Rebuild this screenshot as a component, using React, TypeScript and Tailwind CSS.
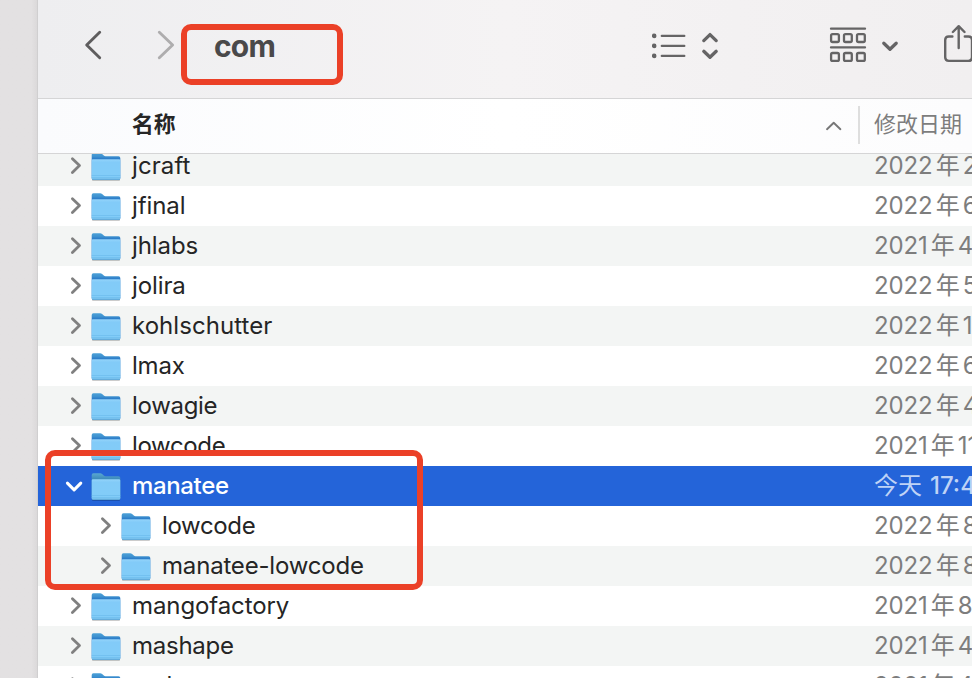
import React from "react";

type Row = { name: string; year: string; rest: string; tracking: string; child?: boolean; selected?: boolean };

const rows: Row[] = [
  { name: "jcraft", year: "2022", rest: "2月", tracking: "tracking-[0.1px]" },
  { name: "jfinal", year: "2022", rest: "6月", tracking: "tracking-[-0.1px]" },
  { name: "jhlabs", year: "2021", rest: "4月", tracking: "tracking-[-0.1px]" },
  { name: "jolira", year: "2022", rest: "5月", tracking: "tracking-[-0.1px]" },
  { name: "kohlschutter", year: "2022", rest: "1月", tracking: "tracking-[0.05px]" },
  { name: "lmax", year: "2022", rest: "6月", tracking: "tracking-[-0.2px]" },
  { name: "lowagie", year: "2022", rest: "4月", tracking: "tracking-[-0.3px]" },
  { name: "lowcode", year: "2021", rest: "11月", tracking: "tracking-[-0.35px]" },
  { name: "manatee", year: "", rest: "17:4", tracking: "tracking-[-0.35px]", selected: true },
  { name: "lowcode", year: "2022", rest: "8月", tracking: "tracking-[-0.35px]", child: true },
  { name: "manatee-lowcode", year: "2022", rest: "8月", tracking: "tracking-[-0.18px]", child: true },
  { name: "mangofactory", year: "2021", rest: "8月", tracking: "tracking-[-0.1px]" },
  { name: "mashape", year: "2021", rest: "4月", tracking: "tracking-[-0.25px]" },
  { name: "mchange", year: "2021", rest: "4月", tracking: "tracking-[-0.1px]" },
];

function Folder({ selected }: { selected?: boolean }) {
  return (
    <svg className="h-[32px] w-[32px] shrink-0" viewBox="0 0 32 32">
      <defs>
        <linearGradient id="back" gradientUnits="userSpaceOnUse" x1="0" y1="3" x2="0" y2="10">
          <stop offset="0" stopColor="#4da2d8" />
          <stop offset="0.5" stopColor="#3f92d0" />
          <stop offset="1" stopColor="#2271c4" />
        </linearGradient>
        <linearGradient id="backSelected" gradientUnits="userSpaceOnUse" x1="0" y1="3" x2="0" y2="10">
          <stop offset="0" stopColor="#5aa9d2" />
          <stop offset="1" stopColor="#3a86b6" />
        </linearGradient>
        <linearGradient id="front" x1="0" y1="0" x2="0" y2="1">
          <stop offset="0" stopColor="#94d4fa" />
          <stop offset="0.15" stopColor="#82cbf8" />
          <stop offset="1" stopColor="#82cdf8" />
        </linearGradient>
      </defs>
      <path d="M2 29h28v1q0 .9-1 .9H3q-1 0-1-.9z" fill="#000" opacity=".2" />
      <path
        d="M1.7 5.1q0-1.9 1.7-1.9h6.8q1.1 0 1.9.8l1.7 1.6q.7.6 1.7.6h13q1.8 0 1.8 1.7V28.3q0 1.4-1.4 1.4H3.1q-1.4 0-1.4-1.4z"
        fill={selected ? "url(#backSelected)" : "url(#back)"}
      />
      <path d="M1.7 10.4q0-1.2 1.2-1.2h26.2q1.2 0 1.2 1.2V28.3q0 1.4-1.4 1.4H3.1q-1.4 0-1.4-1.4z" fill="url(#front)" />
      <path d="M1.7 25.5h28.6M1.7 27.5h28.6" stroke="#65b5e8" strokeWidth=".5" />
      <path d="M2 29.2h28" stroke="#559fce" strokeWidth=".8" />
    </svg>
  );
}

function Disclosure({ open }: { open?: boolean }) {
  return open ? (
    <svg className="h-5 w-5 shrink-0" viewBox="0 0 20 20" fill="none" stroke="#fff" strokeWidth="3" strokeLinecap="round" strokeLinejoin="round">
      <path d="M3.4 7.1 10.1 13.9 16.8 7.1" />
    </svg>
  ) : (
    <svg className="h-5 w-5 shrink-0" viewBox="0 0 20 20" fill="none" stroke="#808080" strokeWidth="2.8" strokeLinecap="round" strokeLinejoin="round">
      <path d="M8.4 2.7 15.5 9.6 8.4 16.5" />
    </svg>
  );
}

function FileRow({ row, index }: { row: Row; index: number }) {
  const tone = row.selected ? "bg-[#2464d9] text-white" : index % 2 === 0 ? "bg-[#f3f5f4] text-[#252525]" : "bg-white text-[#252525]";
  return (
    <div className={`flex h-10 shrink-0 items-center ${tone}`}>
      <div className={`flex w-[836px] shrink-0 items-center ${row.child ? "pl-[56px]" : "pl-[26px]"}`}>
        <Disclosure open={row.selected} />
        <div className="ml-[6px]"><Folder selected={row.selected} /></div>
        <span className={`ml-[10px] whitespace-pre text-[24px] leading-10 ${row.tracking} ${row.selected ? "font-medium" : "font-[430]"}`}>{row.name}</span>
      </div>
      <div className={`flex shrink-0 whitespace-pre text-[24px] font-[440] leading-10 ${row.selected ? "text-[#bfd3f6]" : "text-[#7d7d7d]"}`}>
        {row.selected ? <span>今天</span> : <span className="tracking-[-0.1px]">{row.year}</span>}
        {!row.selected && <span className="ml-[3px]">年</span>}
        <span className={row.selected ? "ml-[8px] font-medium" : "ml-[3px]"}>{row.rest}</span>
      </div>
    </div>
  );
}

function Toolbar() {
  return (
    <header className="flex h-[98px] shrink-0 items-start bg-linear-to-r from-[#eeeef0] via-[#f5f3f4] to-[#f1eff0] pt-[20px]">
      <svg className="ml-[42px] h-[50px] w-[26px] shrink-0" viewBox="0 0 26 50" fill="none" stroke="#5e5d5e" strokeWidth="2.9" strokeLinecap="round" strokeLinejoin="round">
        <path d="M19.7 12.3 6.7 25 19.7 37.7" />
      </svg>
      <svg className="ml-[46px] h-[50px] w-[26px] shrink-0" viewBox="0 0 26 50" fill="none" stroke="#aeadae" strokeWidth="2.9" strokeLinecap="round" strokeLinejoin="round">
        <path d="M7.3 12.3 20.6 25 7.3 37.7" />
      </svg>
      <h1 className="ml-[36px] w-[438px] shrink-0 text-[30px] font-bold leading-[52px] tracking-[-0.8px] text-[#4a494a]">com</h1>
      <svg className="h-[50px] w-[70px] shrink-0" viewBox="652 20 70 50" fill="none" stroke="#656465" strokeWidth="2.3" strokeLinecap="round" strokeLinejoin="round">
        <g fill="#656465" stroke="none">
          <circle cx="654.2" cy="35.9" r="2.3" />
          <circle cx="654.2" cy="45.9" r="2.3" />
          <circle cx="654.2" cy="55.9" r="2.3" />
        </g>
        <path d="M661.8 35.9h22.5M661.8 45.9h22.5M661.8 55.9h22.5" />
        <path d="M703.8 40.6 710 34.6l6.2 6M703.8 51.3l6.2 6 6.2-6" strokeWidth="3.3" />
      </svg>
      <svg className="ml-[107px] h-[50px] w-[72px] shrink-0" viewBox="829 20 72 50" fill="none" stroke="#656465" strokeWidth="2.3" strokeLinecap="round" strokeLinejoin="round">
        <path d="M831 28.7h34M831 47.4h34" />
        <rect x="831.1" y="34.1" width="7.8" height="7.9" rx="1.5" />
        <rect x="844" y="34.1" width="7.8" height="7.9" rx="1.5" />
        <rect x="857" y="34.1" width="7.8" height="7.9" rx="1.5" />
        <rect x="831.1" y="53" width="7.8" height="7.9" rx="1.5" />
        <rect x="844" y="53" width="7.8" height="7.9" rx="1.5" />
        <rect x="857" y="53" width="7.8" height="7.9" rx="1.5" />
        <path d="M883.8 43.2 890 49.2l6.2-6" strokeWidth="3.3" />
      </svg>
      <svg className="ml-[42px] h-[50px] w-[32px] shrink-0" viewBox="943 20 32 50" fill="none" stroke="#656465" strokeWidth="2.4" strokeLinecap="round" strokeLinejoin="round">
        <path d="M952.4 36.5h-3.6q-3.6 0-3.6 3.6v17.2q0 3.6 3.6 3.6h19.6q3.6 0 3.6-3.6V40.1q0-3.6-3.6-3.6h-3.6M958.7 48V26.5M952.9 32l5.8-5.8 5.8 5.8" />
      </svg>
    </header>
  );
}

export default function App() {
  return (
    <div className="relative flex h-[678px] w-[972px] overflow-hidden bg-[#e3e1e2] font-['Inter','Noto_Sans_CJK_SC',sans-serif]">
      <aside className="w-[38px] shrink-0 border-r border-[#d0cfd0] bg-linear-to-r from-[#e3e1e2] from-85% to-[#dbd9da]" />
      <main className="flex min-w-0 flex-1 flex-col overflow-hidden bg-white">
        <Toolbar />
        <div className="flex h-[56px] shrink-0 items-center overflow-hidden border-y border-[#d5d5d6] bg-linear-to-r from-[#fafbfd] via-white to-[#fcfcfd]">
          <span className="-mt-[5px] ml-[94px] w-[693px] shrink-0 text-[21.8px] font-bold leading-[54px] text-[#262626]">名称</span>
          <svg className="h-5 w-5 shrink-0" viewBox="0 0 20 20" fill="none" stroke="#777" strokeWidth="1.9" strokeLinecap="round" strokeLinejoin="round">
            <path d="M2 13.2 8.7 6.7l6.7 6.5" />
          </svg>
          <div className="-mt-[2px] ml-[13px] h-[38px] w-[2px] shrink-0 bg-[#dedede]" />
          <span className="-mt-[5px] ml-[14px] shrink-0 text-[22px] leading-[54px] text-[#7d7d7d]">修改日期</span>
        </div>
        <div className="min-h-0 flex-1 overflow-hidden">
          <div className="-mt-[8px] flex flex-col">
            {rows.map((row, i) => <FileRow key={i} row={row} index={i} />)}
          </div>
        </div>
      </main>
      <div className="absolute left-[180.5px] top-[24px] h-[60.5px] w-[162px] rounded-[10px] border-[6px] border-[#eb4027]" />
      <div className="absolute left-[45px] top-[450px] h-[140px] w-[378px] rounded-[10px] border-[6px] border-[#eb4027]" />
    </div>
  );
}
